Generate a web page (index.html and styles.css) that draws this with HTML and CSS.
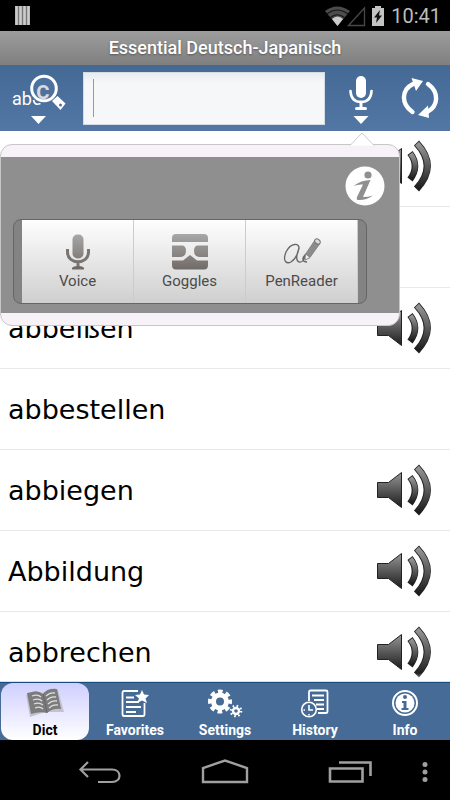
FILE: index.html
```html
<!DOCTYPE html>
<html lang="de">
<head>
<meta charset="utf-8">
<meta name="viewport" content="width=device-width, initial-scale=1">
<title>Essential Deutsch-Japanisch</title>
<link rel="stylesheet" href="styles.css">
</head>
<body>
<svg class="defs" width="0" height="0" aria-hidden="true">
  <defs>
    <linearGradient id="dark" x1="0" y1="0" x2="0" y2="1"><stop offset="0" stop-color="#959595"/><stop offset="1" stop-color="#1c1c1c"/></linearGradient>
    <linearGradient id="metal" x1="0" y1="0" x2="0" y2="36" gradientUnits="userSpaceOnUse"><stop offset="0" stop-color="#a8a8a8"/><stop offset="1" stop-color="#706a66"/></linearGradient>
    <symbol id="speaker" viewBox="0 0 56 52">
      <path d="M1.500 18.500H12.500L25.500 8.500V43.500L12.500 33.500H1.500Z" fill="url(#dark)" stroke="#222" stroke-width="1"/>
      <path d="M34 13Q44 26 34 39.500" fill="none" stroke="#222" stroke-width="6.500"/>
      <path d="M34.500 13.700Q44 26 34.500 38.800" fill="none" stroke="url(#dark)" stroke-width="4.800"/>
      <path d="M40.500 3Q62 26 40.500 49" fill="none" stroke="#222" stroke-width="7"/>
      <path d="M41 3.600Q62 26 41 48.400" fill="none" stroke="url(#dark)" stroke-width="5.400"/>
    </symbol>
  </defs>
</svg>
<div class="screen">
  <div class="status">
    <svg width="15" height="19" viewBox="0 0 15 19" aria-hidden="true"><path d="M0 0H15V19H0Z" fill="#777"/><path d="M1.500 0V19M5.500 0V19M9.500 0V19M13.500 0V19" stroke="#ccc" stroke-width="2.600"/></svg>
    <div class="status-right">
      <svg width="62" height="22" viewBox="0 0 62 22" aria-hidden="true">
        <path d="M2 6Q14 -3 27 6L14.500 21Z" fill="#4c4c4c"/>
        <path d="M4 9Q14 1 25 9M7.500 12.500Q14 7 21.500 12.500" fill="none" stroke="#161616" stroke-width="1.200"/>
        <path d="M9 14Q14.500 9 20 14L14.500 21Z" fill="#ccc"/>
        <path d="M25.500 20.500L41.500 3V20.500Z" fill="none" stroke="#484848" stroke-width="1.300"/>
        <path d="M49 3H52V1H58V3H61V21H49Z" fill="#c4c4c4"/>
        <path d="M57 5L51 12.500H54L53 18L59 10.500H56Z" fill="#111"/>
      </svg>
      <span class="clock">10:41</span>
    </div>
  </div>
  <h1 class="title">Essential Deutsch-Japanisch</h1>
  <header class="toolbar">
    <button class="tool tool-search" aria-label="Suchmodus">
      <svg width="56" height="52" viewBox="0 0 56 52" aria-hidden="true">
        <text x="0" y="33" class="abc">ab</text>
        <path d="M28.500 31.500Q22.500 34 21.500 28" fill="none" stroke="#fff" stroke-width="1.700"/>
        <circle cx="32" cy="16.500" r="12.300" fill="#4d729f" stroke="#fff" stroke-width="3"/>
        <text x="24" y="27" class="lens">c</text>
        <path d="M40 29L45.500 24L53.500 31.500L48.500 38Z" fill="#fff"/><circle cx="48.500" cy="33" r="1.500" fill="#4d729f"/>
        <path d="M19 44H34L26.500 52Z" fill="#fff"/>
      </svg>
    </button>
    <input class="query" type="text" aria-label="Suche">
    <button class="tool" aria-label="Spracheingabe">
      <svg width="24" height="52" viewBox="0 0 24 52" aria-hidden="true">
        <rect x="7" y="4" width="10" height="22" rx="5" fill="#fff"/>
        <path d="M1.500 19Q2 30 12 30T22.500 19" fill="none" stroke="#fff" stroke-width="2.600" stroke-linecap="round"/>
        <path d="M12 30V36M7.500 36.500H16.500" stroke="#fff" stroke-width="3" stroke-linecap="round"/>
        <path d="M4.500 44H19.500L12 52Z" fill="#fff"/>
      </svg>
    </button>
    <button class="tool" aria-label="Richtung wechseln">
      <svg width="38" height="42" viewBox="0 0 38 42" aria-hidden="true">
        <path d="M11.500 35C0 27 0 13 12 7M27 7C38 15 38 29 26 35" fill="none" stroke="#fff" stroke-width="4.400" stroke-linecap="round"/>
        <path d="M10.500 1L22 4L15 14ZM27 28.500L28 41L17 38Z" fill="#fff"/>
      </svg>
    </button>
  </header>
  <main class="content">
    <ul class="words">
      <li><span>abbauen</span><button class="sound" aria-label="Anhören"><svg width="56" height="52"><use href="#speaker"/></svg></button></li>
      <li></li>
      <li><span>abbeißen</span><button class="sound" aria-label="Anhören"><svg width="56" height="52"><use href="#speaker"/></svg></button></li>
      <li><span>abbestellen</span></li>
      <li><span>abbiegen</span><button class="sound" aria-label="Anhören"><svg width="56" height="52"><use href="#speaker"/></svg></button></li>
      <li><span>Abbildung</span><button class="sound" aria-label="Anhören"><svg width="56" height="52"><use href="#speaker"/></svg></button></li>
      <li><span>abbrechen</span><button class="sound" aria-label="Anhören"><svg width="56" height="52"><use href="#speaker"/></svg></button></li>
    </ul>
    <section class="popup" aria-label="Eingabe">
      <svg class="arrow" width="26" height="14" viewBox="0 0 26 14" aria-hidden="true"><path d="M1 13.500L13 1L25 13.500" fill="#fff" stroke="#ccc"/></svg>
      <div class="panel">
        <button class="help" aria-label="Info">
          <svg width="40" height="40" viewBox="0 0 40 40" aria-hidden="true"><circle cx="20" cy="20" r="19.500" fill="#fff"/><circle cx="23" cy="9" r="3.600" fill="#8f8f8f"/><path d="M8.500 20Q16 14 25.500 14L18 31Q23 31 28 29.500Q21 34.500 13 34Q11 33.500 12 31L18 18.500Q13 18 8.500 20Z" fill="#8f8f8f"/></svg>
        </button>
        <div class="inputs">
          <button><svg width="36" height="36" viewBox="0 0 36 36" aria-hidden="true"><rect x="12.500" y="0.500" width="11" height="24" rx="5" fill="url(#metal)"/><path d="M7.500 15V18C7.500 31 28.500 31 28.500 18V15M18 28V33" fill="none" stroke="#7a7571" stroke-width="3"/><path d="M12 35.500V34Q13 32 18 32T24 34V35.500Z" fill="#706a66"/></svg>Voice</button>
          <button><svg width="36" height="36" viewBox="0 0 36 36" aria-hidden="true"><path d="M0 8V4Q0 0 4 0H32Q36 0 36 4V8ZM0 11.500H10Q14 11.500 14 17T9 23H0ZM36 11.500H26Q22 11.500 22 17T27 23H36ZM0 26.500H11L18 21L25 26.500H36V31Q36 35.500 32 35.500H4Q0 35.500 0 31Z" fill="url(#metal)"/></svg>Goggles</button>
          <button><svg width="38" height="36" viewBox="0 0 38 36" aria-hidden="true"><path d="M16 15C17 9 8 8 3 18C-1 28 4 30 8 28C13 25 15 19 16 14C13 22 13 27 16 28C20 29 22 24 22 21C19 24 19 28 24 28" fill="none" stroke="#666" stroke-width="1.300"/><path d="M22.500 20L22 26L27 23.500L37 9.500L32 6Z" fill="#8c8c8c" stroke="#777" stroke-width=".7"/><path d="M22.500 20L22 26L27 23.500Z" fill="#eee" stroke="#777" stroke-width=".7"/><ellipse cx="34.500" cy="7.500" rx="3" ry="2.200" fill="#ddd" stroke="#777" transform="rotate(38 34.500 7.500)"/></svg>PenReader</button>
        </div>
      </div>
    </section>
  </main>
  <nav class="tabs">
    <a href="#dict" class="active" aria-current="page"><svg width="40" height="32" viewBox="0 0 40 32" aria-hidden="true"><path d="M1 8L5 30L20 25L39 25L33 3" fill="#c2c2d0"/><path d="M2 6L7 5Q13 3 18 7Q22 1 32 2L36 22Q28 21 22 26Q15 24 6 27Z" fill="#7c7c7c"/><path d="M18 7L22 26" stroke="#666"/><path d="M7 9Q13 7 16 10M8 13Q14 11 17 14M9 17Q14 15 18 18M10 21Q15 19 18 22M21 9Q25 5 30 6M22 13Q26 9 31 10M23 17Q27 13 32 14M24 21Q28 17 33 18" fill="none" stroke="#ddd" stroke-width="1.300"/></svg>Dict</a>
    <a href="#favorites"><svg width="40" height="32" viewBox="0 0 40 32" aria-hidden="true"><path d="M23 4H9Q7.500 4 7.500 6V27Q7.500 29 9 29H28Q29.500 29 29.500 27V16" fill="none" stroke="#fff" stroke-width="1.800"/><path d="M11 10.500H19M11 15H24M11 20H26M11 25H21" stroke="#fff" stroke-width="2"/><path d="M27 3L29 7.500L34 8L30.500 11.500L32 16L27 13.500L22 16L24 11.500L20 8L25 7.500Z" fill="#fff"/></svg>Favorites</a>
    <a href="#settings"><svg width="40" height="32" viewBox="0 0 40 32" aria-hidden="true"><circle cx="15" cy="14.500" r="6.500" fill="none" stroke="#fff" stroke-width="5"/><circle cx="15" cy="14.500" r="10" fill="none" stroke="#fff" stroke-width="4" stroke-dasharray="4.600 3.254" stroke-dashoffset="2.300"/><circle cx="31" cy="24" r="3" fill="none" stroke="#fff" stroke-width="2.400"/><circle cx="31" cy="24" r="5.200" fill="none" stroke="#fff" stroke-width="2.200" stroke-dasharray="1.600 2.484"/></svg>Settings</a>
    <a href="#history"><svg width="40" height="32" viewBox="0 0 40 32" aria-hidden="true"><path d="M14 14V5Q14 3.500 15.500 3.500H31Q32.500 3.500 32.500 5V24Q32.500 26 31 26H23" fill="none" stroke="#fff" stroke-width="1.800"/><path d="M17 8.500H29M19 13H29M21 17.500H29M22 22H29" stroke="#fff" stroke-width="1.800"/><circle cx="14" cy="22.500" r="7.300" fill="none" stroke="#fff" stroke-width="1.600"/><path d="M14 18V23H18M8.500 23H10M14 27V28.500" fill="none" stroke="#fff" stroke-width="1.600"/></svg>History</a>
    <a href="#info"><svg width="40" height="32" viewBox="0 0 40 32" aria-hidden="true"><circle cx="20" cy="16" r="12" fill="none" stroke="#fff" stroke-width="2"/><circle cx="20" cy="16" r="9.500" fill="#fff"/><circle cx="20" cy="10" r="2" fill="#456b98"/><path d="M17 14H21.500V21H23.500V23H16.500V21H18.500V16H17Z" fill="#456b98"/></svg>Info</a>
  </nav>
  <div class="system">
    <div class="keys">
      <button aria-label="Zurück"><svg width="44" height="24" viewBox="0 0 44 24" aria-hidden="true"><path d="M2 9.500H34C44 9.500 44 22 34 22H20M10 2L2.500 9.500L10 17" fill="none" stroke="#a0a0a0" stroke-width="2.200"/></svg></button>
      <button aria-label="Startseite"><svg width="48" height="26" viewBox="0 0 48 26" aria-hidden="true"><path d="M2 23V9L24 1.500L46 9V23Z" fill="none" stroke="#a0a0a0" stroke-width="2.400"/></svg></button>
      <button aria-label="Letzte Apps"><svg width="44" height="24" viewBox="0 0 44 24" aria-hidden="true"><path d="M2 8.500H34.500V21.500H2ZM11 2.500H42.500V16" fill="none" stroke="#a0a0a0" stroke-width="2.600"/></svg></button>
    </div>
    <button aria-label="Menü"><svg width="6" height="22" viewBox="0 0 6 22" aria-hidden="true"><circle cx="3" cy="3.500" r="2.500" fill="#a0a0a0"/><circle cx="3" cy="11" r="2.500" fill="#a0a0a0"/><circle cx="3" cy="18.500" r="2.500" fill="#a0a0a0"/></svg></button>
  </div>
</div>
</body>
</html>
```

FILE: styles.css
```css
* { box-sizing: border-box; }
body { margin: 0; background: #000; font-family: Roboto, sans-serif; }
button { margin: 0; padding: 0; border: 0; background: none; font: inherit; color: inherit; }
svg { display: block; flex: none; }
.defs { position: absolute; }
.screen { display: flex; flex-direction: column; height: 100vh; }

.status { flex: none; height: 31px; padding: 0 9px 0 15px; display: flex; align-items: center; justify-content: space-between; }
.status-right { display: flex; align-items: center; gap: 6px; }
.clock { padding-top: 2px; color: #bcbcbc; font-size: 20px; line-height: 29px; }

.title { flex: none; margin: 0; height: 34px; background: linear-gradient(#9d9d9d, #7f7f7f); color: #fff; font-size: 18px; font-weight: 500; line-height: 34px; text-align: center; text-shadow: 0 1px 2px #555; }

.toolbar { flex: none; height: 66px; padding: 0 11px 0 12px; display: flex; align-items: center; background: linear-gradient(#446995, #5277a4); }
.tool-search { margin-right: 15px; }
.tool + .tool { margin-left: 28px; }
.abc { font: 18px Roboto, sans-serif; fill: #fff; }
.lens { font: 500 26px Roboto, sans-serif; fill: #d8dade; }
.query { flex: 1; min-width: 0; height: 53px; margin-right: 24px; padding: 0 10px; border: 1px solid #d5dbe4; border-radius: 0; outline: 0; background: linear-gradient(#999, #999) 9px 6px / 1px 38px no-repeat, linear-gradient(#e9ebee, #f6f7f9 10px); font-size: 38px; color: #222; caret-color: #888; }
.query:focus { background: linear-gradient(#e9ebee, #f6f7f9 10px); }

.content { flex: 1; min-height: 0; position: relative; overflow: hidden; background: #fff; border-bottom: 1px solid #ddd; }
.content::after { content: ""; position: absolute; inset: auto 0 0; height: 8px; background: linear-gradient(#fff0, #fffb); }
.words { list-style: none; margin: -5px 0 0; padding: 0; }
.words li { height: 81px; padding: 0 18px 0 8px; display: flex; align-items: center; justify-content: space-between; border-bottom: 1px solid #e8e8e8; font: 27px/36px "DejaVu Sans", sans-serif; color: #000; }
.words span { padding-top: 2px; }

.popup { position: absolute; top: 13px; left: 0; width: 400px; max-width: 100%; padding: 12px 0; border: 1px solid #c8c6c8; border-radius: 12px; background: #f7f2f7; }
.arrow { position: absolute; top: -13px; right: 24px; }
.panel { padding: 9px 32px 9px 12px; background: #8f8f8f; display: flex; flex-direction: column; }
.help { align-self: flex-end; margin: 0 -18px 13px 0; }
.inputs { display: flex; padding: 0 8px; border: 1px solid #666; border-radius: 8px; background: #838383; }
.inputs button { flex: 1; height: 83px; padding: 14px 0 0; display: flex; flex-direction: column; align-items: center; gap: 1px; border-right: 1px solid #ccc; background: linear-gradient(#fefefe, #cfcfcf); color: #4b4b4b; font-size: 15px; line-height: 20px; }

.tabs { flex: none; height: 58px; display: flex; background: #456b96; border-top: 1px solid #174c7d; }
.tabs a { flex: 1; margin: 0 1px; padding-top: 4px; display: flex; flex-direction: column; align-items: center; color: #fff; font-size: 14px; font-weight: 700; line-height: 22px; text-decoration: none; }
.tabs .active { background: linear-gradient(#cfcfff, #fff); border-radius: 12px; color: #000; }

.system { flex: none; height: 60px; padding: 4px 22px 0 78px; display: flex; align-items: center; gap: 50px; }
.keys { flex: 1; display: flex; align-items: center; justify-content: space-between; }
```
